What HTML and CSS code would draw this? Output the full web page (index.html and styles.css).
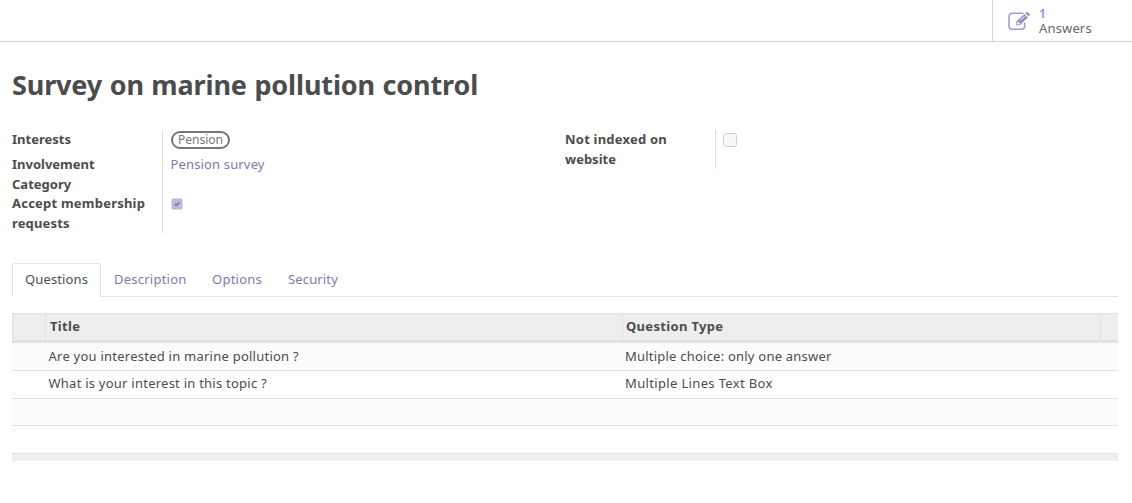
FILE: index.html
```html
<!DOCTYPE html>
<html lang="en">
<head>
<meta charset="utf-8">
<title>Survey on marine pollution control</title>
<link rel="stylesheet" href="styles.css">
</head>
<body>
<header class="button-box">
  <div class="stat-button">
    <svg class="stat-icon" width="23" height="20" viewBox="0 0 23 20" fill="none">
      <path d="M15.2 2.200H4.200A3.200 3.200 0 0 0 1 5.400V15A3.200 3.200 0 0 0 4.200 18.200H13.500A3.200 3.200 0 0 0 16.700 15V12.300" stroke="#a29bcb" stroke-width="1.500" stroke-linecap="round"/>
      <path fill-rule="evenodd" d="M8.300 10.600L16.500 2.900L19.900 6.400L11.800 14.300H8.300ZM9.300 11.400V13.200H11.300L12 12.500L10 10.700ZM12 9.300L12.500 9.800L16.900 5.600L16.400 5.100Z" fill="#978fc4"/>
      <path d="M17.300 2.200L18.300 1.300Q19.200.6 20.100 1.400L21.500 2.800Q22.300 3.700 21.500 4.600L20.600 5.600Z" fill="#978fc4"/>
    </svg>
    <div class="stat-info">
      <span class="stat-value">1</span>
      <span class="stat-text">Answers</span>
    </div>
  </div>
</header>
<main class="sheet">
  <h1 class="title">Survey on marine pollution control</h1>
  <div class="groups">
    <div class="group">
      <div class="field"><div class="label"><div class="label-text">Interests</div></div><div class="value"><span class="tag">Pension</span></div></div>
      <div class="field field-two"><div class="label"><div class="label-text">Involvement<br>Category</div></div><div class="value"><a class="link">Pension survey</a></div></div>
      <div class="field field-two"><div class="label"><div class="label-text"><span class="spaced">Accept membership</span><br><span class="semi-spaced">requests</span></div></div><div class="value">
        <svg class="check-on" width="12" height="12" viewBox="0 0 12 12"><rect x=".5" y=".5" width="11" height="11" rx="1.500" fill="#bdb8d9"/><path d="M3.700 6L5.300 7.500L8.400 4.500" fill="none" stroke="#7770ad" stroke-width="1.400"/></svg>
      </div></div>
    </div>
    <div class="group">
      <div class="field field-two"><div class="label"><div class="label-text"><span class="spaced">Not indexed on</span><br>website</div></div><div class="value value-index"><span class="check-off"></span></div></div>
    </div>
  </div>
  <nav class="tabs">
    <a class="tab active">Questions</a>
    <a class="tab tab-description">Description</a>
    <a class="tab tab-options">Options</a>
    <a class="tab tab-security">Security</a>
  </nav>
  <div class="list">
    <div class="row head"><div></div><div class="head-title">Title</div><div>Question Type</div><div></div></div>
    <div class="row odd"><div></div><div class="question">Are you interested in marine pollution ?</div><div class="type">Multiple choice: only one answer</div><div></div></div>
    <div class="row second"><div></div><div class="question">What is your interest in this topic ?</div><div class="type type-lines">Multiple Lines Text Box</div><div></div></div>
    <div class="row odd third"></div>
    <div class="row"></div>
    <div class="foot"></div>
  </div>
</main>
</body>
</html>
```
FILE: styles.css
```css
* { box-sizing: border-box; }
body {
  margin: 0;
  background: #fff;
  color: #4c4c4c;
  font: 13px/20px "Noto Sans", "Open Sans", sans-serif;
}
span, a { white-space: nowrap; }
.button-box {
  display: flex;
  justify-content: flex-end;
  height: 42px;
  border-bottom: 1px solid #ced1d8;
}
.stat-button {
  display: flex;
  width: 140px;
  padding: 11px 0 0 15px;
  border-left: 1px solid #d3d6dc;
}
.stat-info { display: flex; flex-direction: column; margin: -5px 0 0 8px; line-height: 15px; }
.stat-value { color: #a29bcb; font-weight: 700; font-size: 12px; }
.stat-text { color: #666; letter-spacing: .15px; }
.sheet { padding: 0 14px 0 12px; }
.title { margin: 0; padding-top: 23px; height: 88px; font-size: 27px; line-height: 39px; font-weight: 700; letter-spacing: -.14px; word-spacing: .7px; }
.groups { display: flex; height: 133px; }
.group { width: 553px; }
.field { display: flex; height: 25px; }
.field-two { height: 39px; }
.label { width: 151px; height: 100%; border-right: 1px solid #ddd; font-weight: 700; }
.label-text { margin-top: -1px; }
.spaced { letter-spacing: .22px; }
.semi-spaced { letter-spacing: .15px; }
.value { padding-left: 8px; }
.value-index { padding-left: 7px; }
.tag {
  display: flex;
  align-items: center;
  justify-content: center;
  width: 59px;
  height: 18px;
  margin-top: 1px;
  border: 2px solid #777;
  border-radius: 9px;
  color: #777;
  font-size: 12px;
  line-height: 14px;
}
.link { display: block; margin: -1px 0 0 -.5px; color: #7c7bad; letter-spacing: .15px; }
.check-on { display: block; margin-top: 4px; }
.check-off { display: block; width: 14px; height: 14px; margin-top: 3px; border: 1px solid #d0d0d0; border-radius: 3px; background: #f8f8f8; }
.tabs { display: flex; height: 34px; border-bottom: 1px solid #dee2e6; line-height: 20px; }
.tab { height: 33px; padding: 6px 13px 0; color: #7c7bad; letter-spacing: .24px; }
.tab.active { width: 89px; height: 34px; padding: 5px 12px 0; border: 1px solid #dee2e6; border-bottom-color: #fff; border-radius: 3px 3px 0 0; background: #fff; color: #495057; letter-spacing: .12px; }
.tab-description { width: 98px; }
.tab-options { width: 76px; }
.tab-security { letter-spacing: .15px; }
.list { margin-top: 16px; }
.row { display: grid; grid-template-columns: 33px 577px 478px 18px; height: 28px; border-bottom: 1px solid #dee2e6; line-height: 27px; }
.row > div { padding-left: 3px; }
.head { height: 30px; border-top: 1px solid #dee2e6; border-bottom: 3px solid #dee2e6; background: #eee; font-weight: 700; line-height: 24px; letter-spacing: .32px; }
.head > div { border-left: 1px solid #dee2e6; }
.row > .head-title { padding-left: 4px; }
.odd { background: #fcfcfc; }
.second { line-height: 25px; }
.row > .question { padding-left: 3.500px; letter-spacing: .24px; }
.type { letter-spacing: .22px; }
.type-lines { letter-spacing: .35px; }
.third { height: 27px; }
.foot { height: 7px; background: #eee; }
```
